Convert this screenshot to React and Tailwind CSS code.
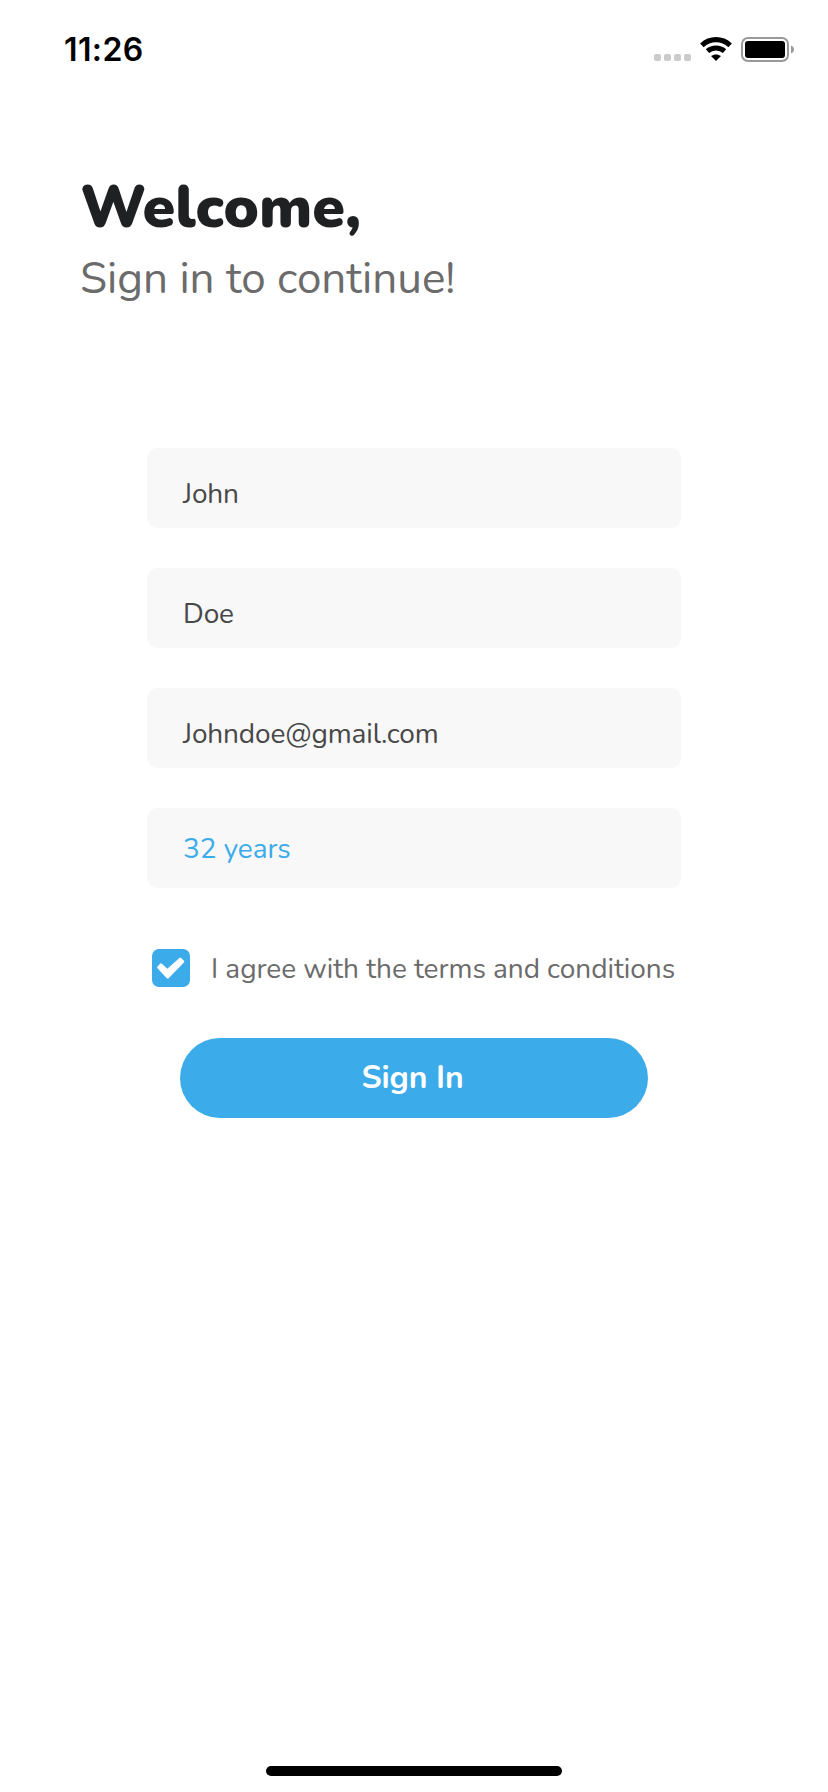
const FIELDS = [
  { name: "first", value: "John", text: "tracking-[-0.15px] text-[#484848] pt-3" },
  { name: "last", value: "Doe", text: "tracking-[-0.15px] text-[#484848] pt-3" },
  { name: "email", value: "Johndoe@gmail.com", text: "tracking-[-0.15px] text-[#484848] pt-3" },
  { name: "age", value: "32 years", text: "tracking-[-0.05px] text-[#3babea] pt-0.5" },
];

function StatusBar() {
  return (
    <header className="flex h-[98px] items-start justify-between pl-16 pr-[34px]">
      <time className="pt-[30px] font-[Inter,sans-serif] text-[32px] font-semibold leading-10 tracking-[0.4px] text-black">
        11:26
      </time>
      <div className="flex h-6 items-start mt-[37px]">
        <div className="mt-[17px] mr-[9px] flex gap-[3px]">
          <i className="size-[7px] rounded-[2px] bg-[#cbcbcb]" />
          <i className="size-[7px] rounded-[2px] bg-[#cbcbcb]" />
          <i className="size-[7px] rounded-[2px] bg-[#cbcbcb]" />
          <i className="size-[7px] rounded-[2px] bg-[#cbcbcb]" />
        </div>
        <svg className="mr-[9px] h-6 w-8" viewBox="0 0 32 24" fill="none">
          <path d="M1.900 8.300C10 .8 22 .8 30.100 8.300" stroke="#000" strokeWidth="5.200" />
          <path d="M7.500 14.200C12.300 10 19.700 10 24.500 14.200" stroke="#000" strokeWidth="5" />
          <path d="M11 19.100C13.800 16.800 18.200 16.800 21 19.100L16 24Z" fill="#000" />
        </svg>
        <svg className="h-[25px] w-[53px]" viewBox="0 0 53 25">
          <rect x="1" y="1" width="46" height="23" rx="6" fill="none" stroke="#999" strokeWidth="2" />
          <rect x="4" y="4" width="40" height="17" rx="3" fill="#000" />
          <path d="M50 8.500C51.800 9.200 53 10.700 53 12.500C53 14.300 51.800 15.800 50 16.500Z" fill="#999" />
        </svg>
      </div>
    </header>
  );
}

export default function App() {
  return (
    <div className="flex h-[1792px] w-[828px] flex-col bg-white font-[Nunito,Lato,sans-serif]">
      <StatusBar />

      <div className="h-[350px] pl-20 pt-[74px]">
        <h1 className="text-[59px] font-black leading-[72px] text-[#1e2022] whitespace-nowrap">
          Welcome,
        </h1>
        <p className="mt-[3px] text-[44px] font-normal leading-[64px] text-[#6b6b6b] whitespace-nowrap">
          Sign in to continue!
        </p>
      </div>

      <form className="flex flex-col" onSubmit={(e) => e.preventDefault()}>
        <div className="mx-[147px] flex flex-col gap-10">
          {FIELDS.map((f) => (
            <div key={f.name} className="flex h-20 items-center rounded-[10px] bg-[#f8f8f8] pl-9 text-[28px] leading-9">
              <span className={f.text}>{f.value}</span>
            </div>
          ))}
        </div>

        <div className="mt-[61px] ml-[152px] flex h-[38px] items-center gap-[21px]">
          <span className="flex size-[38px] shrink-0 rounded-[7px] bg-[#3babea]">
            <svg className="size-[38px]" viewBox="0 0 38 38">
              <path d="M6.500 18.300L9 15.600L15.300 21.500L28.300 9.900L31 12.700L15.700 28.300Z" fill="#fff" stroke="#fff" strokeWidth="2.600" strokeLinejoin="round" />
            </svg>
          </span>
          <span className="pt-0.5 text-[28px] leading-9 tracking-[-0.04px] text-[#6b6b6b] whitespace-nowrap">
            I agree with the terms and conditions
          </span>
        </div>

        <button type="submit" className="mt-[51px] ml-[180px] flex h-20 w-[468px] items-center justify-center rounded-full bg-[#3babea] text-[32px] font-bold leading-10 text-white">
          <span className="-ml-[3px] tracking-[-0.1px]">Sign In</span>
        </button>
      </form>

      <div className="mt-auto mb-4 ml-[266px] h-[10px] w-[296px] rounded-full bg-black" />
    </div>
  );
}
